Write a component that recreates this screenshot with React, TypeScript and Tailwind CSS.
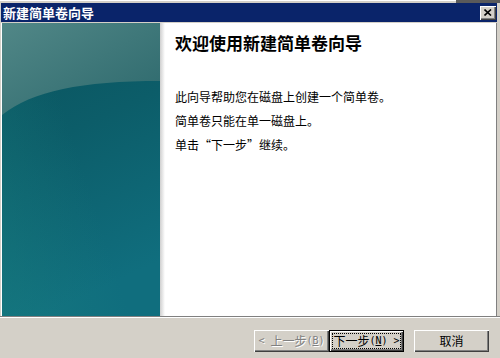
const cjk = "font-['Noto_Sans_CJK_SC','Liberation_Sans',sans-serif]";
const half = "font-['DejaVu_Sans_Mono',monospace] text-[10px] whitespace-pre";

function WizardArt() {
  return (
    <svg width="158" height="293" viewBox="0 0 158 293" preserveAspectRatio="none">
      <defs>
        <linearGradient id="upper" x1="0" y1="0" x2="1" y2="1">
          <stop offset="0" stopColor="#518787" />
          <stop offset="1" stopColor="#2c686c" />
        </linearGradient>
        <linearGradient id="lower" x1="0" y1="0" x2="0.25" y2="1">
          <stop offset="0" stopColor="#0a535d" />
          <stop offset="0.45" stopColor="#0c5d69" />
          <stop offset="1" stopColor="#106e7e" />
        </linearGradient>
        <linearGradient id="glow" x1="0" y1="1" x2="1" y2="0.4">
          <stop offset="0" stopColor="#1a8080" stopOpacity="0.45" />
          <stop offset="0.6" stopColor="#1a8080" stopOpacity="0" />
        </linearGradient>
      </defs>
      <rect width="158" height="293" fill="url(#lower)" />
      <rect width="158" height="293" fill="url(#glow)" />
      <path d="M0 0 H158 V58 C80 58 30 68 0 92 Z" fill="url(#upper)" />
    </svg>
  );
}

function WinButton({
  children,
  isDefault,
  disabled,
}: {
  children: React.ReactNode;
  isDefault?: boolean;
  disabled?: boolean;
}) {
  const bevel = isDefault
    ? "border border-black shadow-[inset_1px_1px_0_#ffffff,inset_-1px_-1px_0_#404040,inset_-2px_-2px_0_#808080]"
    : "shadow-[inset_1px_1px_0_#ffffff,inset_-1px_-1px_0_#404040,inset_-2px_-2px_0_#808080,inset_2px_2px_0_#d4d0c8]";
  return (
    <div className={`w-[75px] h-[22px] bg-[#d4d0c8] flex items-center justify-center ${bevel}`}>
      <div
        className={`flex items-center justify-center text-[12px] leading-[12px] ${
          isDefault ? "w-[67px] h-[14px] outline-1 outline-dotted outline-black" : ""
        } ${disabled ? "text-[#808080] [text-shadow:1px_1px_0_#ffffff]" : "text-black"}`}
      >
        {children}
      </div>
    </div>
  );
}

export default function App() {
  return (
    <div className={`w-[500px] h-[358px] bg-[#d4d0c8] flex flex-col overflow-hidden ${cjk}`}>
      <div className="h-[3px] flex">
        <div className="flex-1 border-t border-white" />
        <div className="w-[44px] bg-[#5a5a5a]" />
      </div>

      <div className="h-[19px] ml-[1px] mr-[3px] bg-[#0a246a] flex items-center justify-between pl-[2px] pr-[1px]">
        <span className="text-white text-[13px] leading-[13px] font-bold">新建简单卷向导</span>
        <div className="w-[16px] h-[14px] bg-[#d4d0c8] flex items-center justify-center shadow-[inset_1px_1px_0_#ffffff,inset_-1px_-1px_0_#404040,inset_-2px_-2px_0_#808080]">
          <svg width="8" height="7" viewBox="0 0 8 7">
            <path d="M0.5 0.5 L7 6.5 M7 0.5 L0.5 6.5" stroke="#000" strokeWidth="1.6" />
          </svg>
        </div>
      </div>

      <div className="h-[1px]" />

      <div className="h-[293px] flex ml-[1px] mr-[3px] border-l border-white">
        <div className="w-[158px] h-full">
          <WizardArt />
        </div>
        <div className="flex-1 bg-white border-r border-[#808080] flex">
          <div className="w-[5px] h-full bg-gradient-to-r from-[#cfcfcf] to-white" />
          <div className="pl-[10px] pt-[11px] text-black">
            <h1 className="text-[17px] leading-[17px] font-bold">欢迎使用新建简单卷向导</h1>
            <div className="mt-[34px] text-[12px] leading-[24px]">
              <p>此向导帮助您在磁盘上创建一个简单卷。</p>
              <p>简单卷只能在单一磁盘上。</p>
              <p>单击“下一步”继续。</p>
            </div>
          </div>
        </div>
      </div>

      <div className="h-px bg-[#808080]" />
      <div className="h-px bg-white" />

      <div className="flex-1 flex justify-end items-start pt-[12px] pr-[11px]">
        <WinButton disabled>
          <span className={half}>{"< "}</span>上一步<span className={half}>(</span>
          <span className={`${half} underline`}>B</span>
          <span className={half}>)</span>
        </WinButton>
        <WinButton isDefault>
          下一步<span className={half}>(</span>
          <span className={`${half} underline`}>N</span>
          <span className={half}>{") >"}</span>
        </WinButton>
        <div className="ml-[10px]">
          <WinButton>取消</WinButton>
        </div>
      </div>
    </div>
  );
}
